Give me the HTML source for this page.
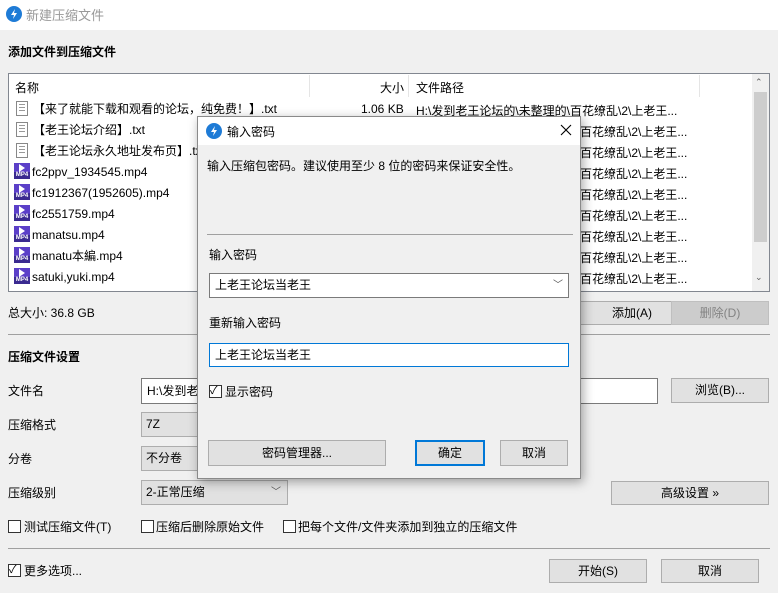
<!DOCTYPE html>
<html><head><meta charset="utf-8"><style>
*{box-sizing:border-box;margin:0;padding:0}
body{width:778px;height:593px;background:#f0f0f0;font-family:"Liberation Sans","Noto Sans CJK SC",sans-serif;font-size:12px;color:#000;position:relative;overflow:hidden}
.a{position:absolute;white-space:nowrap}
.btn{position:absolute;background:#e1e1e1;border:1px solid #adadad;text-align:center}
.inp{position:absolute;background:#fff;border:1px solid #7a7a7a;padding-left:5px}
.cb{position:absolute;width:13px;height:13px;border:1px solid #333;background:#fff}
.row{position:absolute;left:14px;height:21px;line-height:21px}
.txt{display:inline-block;width:12px;height:15px;border:1px solid #888;vertical-align:-3px;margin-right:5px;margin-left:2px;background:repeating-linear-gradient(#fff 0 2px,#999 2px 3px);background-clip:content-box;padding:2px 2px}
.mp4{display:inline-block;width:16px;height:16px;background:#5b3fc8;vertical-align:-3px;margin-right:2px;position:relative}
.mp4:before{content:"";position:absolute;left:5px;top:1px;border-left:6px solid #fff;border-top:4px solid transparent;border-bottom:4px solid transparent}
.mp4:after{content:"MP4";position:absolute;left:0;top:9px;font-size:6px;line-height:7px;color:#fff;font-weight:bold;background:#3a2a90;width:16px;text-align:center}
.path{position:absolute;left:416px}
</style></head><body>
<div class="a" style="left:0;top:0;width:778px;height:30px;background:#fff"></div>
<svg class="a" style="left:6px;top:6px" width="16" height="16"><circle cx="8" cy="8" r="8" fill="#1e7bd6"/><path d="M9 3L5 9h3l-1 4 4-6H8z" fill="#fff"/></svg>
<div class="a" style="left:26px;top:5px;color:#999;font-size:13px">新建压缩文件</div>
<div class="a" style="left:8px;top:43px;font-weight:bold">添加文件到压缩文件</div>

<div class="a" style="left:8px;top:73px;width:762px;height:219px;background:#fff;border:1px solid #828790"></div>
<div class="a" style="left:15px;top:79px">名称</div>
<div class="a" style="left:309px;top:75px;width:1px;height:22px;background:#e5e5e5"></div>
<div class="a" style="left:380px;top:79px">大小</div>
<div class="a" style="left:408px;top:75px;width:1px;height:22px;background:#e5e5e5"></div>
<div class="a" style="left:416px;top:79px">文件路径</div>
<div class="a" style="left:699px;top:75px;width:1px;height:22px;background:#e5e5e5"></div>
<div class="a" style="left:752px;top:74px;width:17px;height:217px;background:#f0f0f0"></div>
<div class="a" style="left:754px;top:92px;width:13px;height:150px;background:#cdcdcd"></div>
<div class="a" style="left:755px;top:77px;font-size:9px;color:#606060">⌃</div>
<div class="a" style="left:755px;top:272px;font-size:9px;color:#606060">⌄</div>

<div class="row" style="top:99px"><span class="txt"></span>【来了就能下载和观看的论坛，纯免费！】.txt</div>
<div class="a" style="left:361px;top:102px">1.06 KB</div>
<div class="path a" style="top:102px">H:\发到老王论坛的\未整理的\百花缭乱\2\上老王...</div>
<div class="row" style="top:120px"><span class="txt"></span>【老王论坛介绍】.txt</div>
<div class="row" style="top:141px"><span class="txt"></span>【老王论坛永久地址发布页】.txt</div>
<div class="row" style="top:162px"><span class="mp4"></span>fc2ppv_1934545.mp4</div>
<div class="row" style="top:183px"><span class="mp4"></span>fc1912367(1952605).mp4</div>
<div class="row" style="top:204px"><span class="mp4"></span>fc2551759.mp4</div>
<div class="row" style="top:225px"><span class="mp4"></span>manatsu.mp4</div>
<div class="row" style="top:246px"><span class="mp4"></span>manatu本編.mp4</div>
<div class="row" style="top:267px"><span class="mp4"></span>satuki,yuki.mp4</div>
<div class="a" style="left:580px;top:123px">百花缭乱\2\上老王...</div>
<div class="a" style="left:580px;top:144px">百花缭乱\2\上老王...</div>
<div class="a" style="left:580px;top:165px">百花缭乱\2\上老王...</div>
<div class="a" style="left:580px;top:186px">百花缭乱\2\上老王...</div>
<div class="a" style="left:580px;top:207px">百花缭乱\2\上老王...</div>
<div class="a" style="left:580px;top:228px">百花缭乱\2\上老王...</div>
<div class="a" style="left:580px;top:249px">百花缭乱\2\上老王...</div>
<div class="a" style="left:580px;top:270px">百花缭乱\2\上老王...</div>

<div class="a" style="left:8px;top:304px">总大小: 36.8 GB</div>
<div class="btn" style="left:560px;top:301px;width:124px;height:24px;line-height:22px;padding-left:20px">添加(A)</div>
<div class="btn" style="left:671px;top:301px;width:98px;height:24px;line-height:22px;background:#cccccc;border-color:#bfbfbf;color:#838383">删除(D)</div>
<div class="a" style="left:8px;top:334px;width:762px;height:1px;background:#a0a0a0"></div>
<div class="a" style="left:8px;top:348px;font-weight:bold">压缩文件设置</div>
<div class="a" style="left:8px;top:382px">文件名</div>
<div class="inp" style="left:141px;top:378px;width:517px;height:26px;line-height:24px">H:\发到老</div>
<div class="btn" style="left:671px;top:378px;width:98px;height:25px;line-height:23px">浏览(B)...</div>
<div class="a" style="left:8px;top:416px">压缩格式</div>
<div class="btn" style="left:141px;top:412px;width:80px;height:25px;line-height:23px;text-align:left;padding-left:4px">7Z</div>
<div class="a" style="left:8px;top:450px">分卷</div>
<div class="btn" style="left:141px;top:446px;width:80px;height:25px;line-height:23px;text-align:left;padding-left:4px">不分卷</div>
<div class="a" style="left:8px;top:484px">压缩级别</div>
<div class="btn" style="left:141px;top:480px;width:147px;height:25px;line-height:23px;text-align:left;padding-left:4px">2-正常压缩<span style="position:absolute;right:6px;font-size:10px;color:#555">﹀</span></div>
<div class="btn" style="left:611px;top:481px;width:158px;height:24px;line-height:22px">高级设置 »</div>
<div class="cb" style="left:8px;top:520px"></div><div class="a" style="left:24px;top:518px">测试压缩文件(T)</div>
<div class="cb" style="left:141px;top:520px"></div><div class="a" style="left:156px;top:518px">压缩后删除原始文件</div>
<div class="cb" style="left:283px;top:520px"></div><div class="a" style="left:298px;top:518px">把每个文件/文件夹添加到独立的压缩文件</div>
<div class="a" style="left:8px;top:548px;width:762px;height:1px;background:#a0a0a0"></div>
<div class="cb" style="left:8px;top:564px"></div><div class="a" style="left:9px;top:561px;font-size:11px">✓</div><div class="a" style="left:24px;top:562px">更多选项...</div>
<div class="btn" style="left:549px;top:559px;width:98px;height:24px;line-height:22px">开始(S)</div>
<div class="btn" style="left:661px;top:559px;width:98px;height:24px;line-height:22px">取消</div>

<div class="a" style="left:197px;top:116px;width:384px;height:363px;background:#f0f0f0;border:1px solid #8a8a8a;box-shadow:2px 3px 10px rgba(0,0,0,.35)"></div>
<div class="a" style="left:198px;top:117px;width:382px;height:28px;background:#fff"></div>
<svg class="a" style="left:206px;top:123px" width="16" height="16"><circle cx="8" cy="8" r="8" fill="#1e7bd6"/><path d="M9 3L5 9h3l-1 4 4-6H8z" fill="#fff"/></svg>
<div class="a" style="left:227px;top:123px">输入密码</div>
<svg class="a" style="left:560px;top:124px" width="12" height="12"><path d="M1 1L11 11M11 1L1 11" stroke="#000" stroke-width="1.1"/></svg>
<div class="a" style="left:207px;top:157px">输入压缩包密码。建议使用至少 8 位的密码来保证安全性。</div>
<div class="a" style="left:207px;top:234px;width:366px;height:1px;background:#a0a0a0"></div>
<div class="a" style="left:209px;top:246px">输入密码</div>
<div class="inp" style="left:209px;top:273px;width:360px;height:25px;line-height:23px;border-color:#7a7a7a">上老王论坛当老王<span style="position:absolute;right:5px;font-size:10px;color:#555">﹀</span></div>
<div class="a" style="left:209px;top:314px">重新输入密码</div>
<div class="inp" style="left:209px;top:343px;width:360px;height:24px;line-height:22px;border-color:#0078d7">上老王论坛当老王</div>
<div class="cb" style="left:209px;top:385px"></div><div class="a" style="left:210px;top:382px;font-size:11px">✓</div>
<div class="a" style="left:225px;top:383px">显示密码</div>
<div class="btn" style="left:208px;top:440px;width:178px;height:26px;line-height:24px">密码管理器...</div>
<div class="btn" style="left:415px;top:440px;width:70px;height:26px;line-height:22px;border:2px solid #0078d7">确定</div>
<div class="btn" style="left:500px;top:440px;width:68px;height:26px;line-height:24px">取消</div>
</body></html>
